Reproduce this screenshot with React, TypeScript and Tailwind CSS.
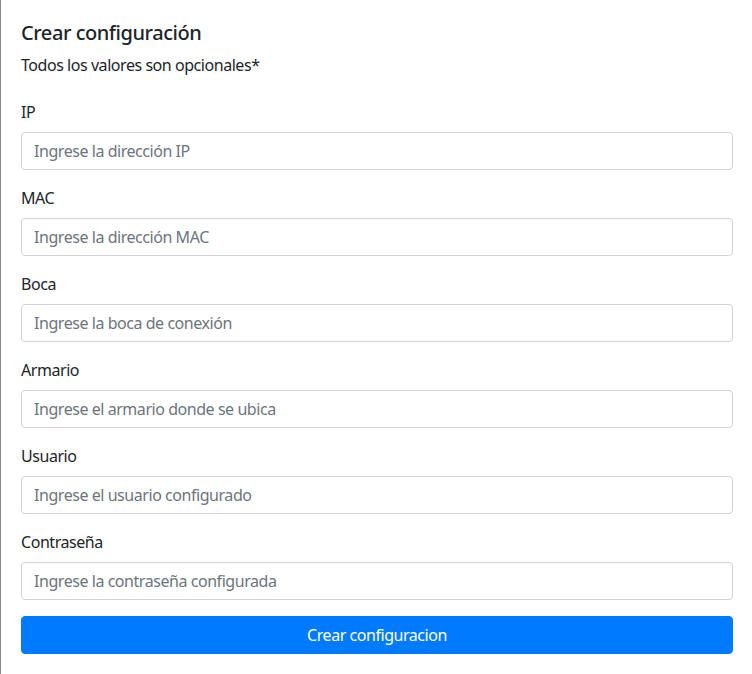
import React from "react";

const fields = [
  { label: "IP", placeholder: "Ingrese la dirección IP" },
  { label: "MAC", placeholder: "Ingrese la dirección MAC" },
  { label: "Boca", placeholder: "Ingrese la boca de conexión" },
  { label: "Armario", placeholder: "Ingrese el armario donde se ubica" },
  { label: "Usuario", placeholder: "Ingrese el usuario configurado" },
  { label: "Contraseña", placeholder: "Ingrese la contraseña configurada" },
];

export default function App() {
  return (
    <div
      className="w-[752px] h-[674px] bg-white border-l border-[#8a8a8a] pl-[20px] pr-[19px] pt-[21px] text-[#212529] overflow-hidden tracking-[-0.45px]"
      style={{ fontFamily: '"Noto Sans", "Open Sans", sans-serif' }}
    >
      <h5 className="text-[20px] leading-[24px] font-medium m-0">Crear configuración</h5>
      <p className="text-[16px] leading-[24px] mt-[8px] mb-[23px]">Todos los valores son opcionales*</p>
      <form onSubmit={(e) => e.preventDefault()}>
        {fields.map((f) => (
          <div key={f.label} className="mb-[16px]">
            <label className="block text-[16px] leading-[24px] mb-[8px]">{f.label}</label>
            <input
              type="text"
              placeholder={f.placeholder}
              className="block w-full h-[38px] px-[12px] text-[16px] tracking-[-0.45px] border border-[#ced4da] rounded-[4px] bg-white text-[#495057] placeholder:text-[#6c757d] outline-none"
            />
          </div>
        ))}
        <button
          type="submit"
          className="block w-full h-[38px] bg-[#007bff] text-white text-[16px] tracking-[-0.45px] rounded-[4px] border border-[#007bff]"
        >
          Crear configuracion
        </button>
      </form>
    </div>
  );
}
